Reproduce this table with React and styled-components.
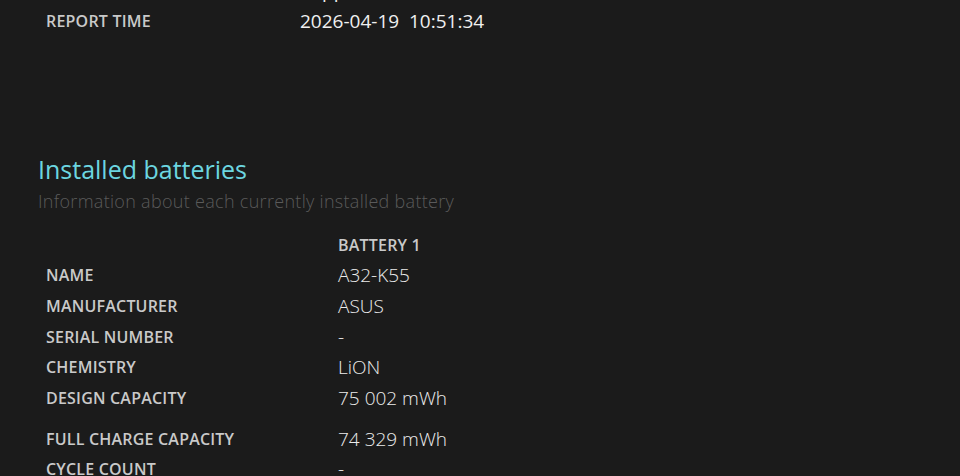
import React from "react";
import styled, { createGlobalStyle } from "styled-components";

const GlobalStyle = createGlobalStyle`
    html, body {
        margin: 0;
        padding: 0;
        background: #1b1b1b;
        overflow: hidden;
    }
    body {
        font-family: "Open Sans", "Noto Sans", sans-serif;
        color: #e6e6e6;
    }
`;

const systemInfo = [
    { label: "Connected standby", value: "Supported" },
    { label: "Report time", value: "2026-04-19\u00a0\u00a010:51:34" },
];

const batteryRows = [
    { label: "Name", value: "A32-K55" },
    { label: "Manufacturer", value: "ASUS" },
    { label: "Serial number", value: "-" },
    { label: "Chemistry", value: "LiON" },
    { label: "Design capacity", value: "75 002 mWh" },
    { label: "Full charge capacity", value: "74 329 mWh", spaced: true },
    { label: "Cycle count", value: "-" },
];

export default function App() {
    return (
        <>
            <GlobalStyle />
            <Page>
                <InfoTable>
                    {systemInfo.map((row) => (
                        <InfoRow key={row.label}>
                            <Label>{row.label}</Label>
                            <InfoValue>{row.value}</InfoValue>
                        </InfoRow>
                    ))}
                </InfoTable>

                <Section>
                    <Heading>Installed batteries</Heading>
                    <SubHeading>Information about each currently installed battery</SubHeading>

                    <BatteryTable>
                        <BatteryRow $head>
                            <span />
                            <ColumnTitle>Battery 1</ColumnTitle>
                        </BatteryRow>
                        {batteryRows.map((row) => (
                            <BatteryRow key={row.label} $spaced={row.spaced}>
                                <Label>{row.label}</Label>
                                <Value>{row.value}</Value>
                            </BatteryRow>
                        ))}
                    </BatteryTable>
                </Section>
            </Page>
        </>
    );
}

const Page = styled.div`
    padding: 0 0 0 37px;
    margin-top: -24px;
`;
const InfoTable = styled.div`
    display: flex;
    flex-direction: column;
`;
const InfoRow = styled.div`
    display: grid;
    grid-template-columns: 254px 1fr;
    align-items: center;
    height: 30px;
    padding-left: 9px;
`;
const Label = styled.div`
    font-size: 16px;
    font-weight: 600;
    letter-spacing: 0.2px;
    text-transform: uppercase;
    color: #c9c9c9;
    white-space: nowrap;
`;
const InfoValue = styled.div`
    font-size: 19px;
    color: #f0f0f0;
    white-space: nowrap;
`;
const Section = styled.section`
    margin-top: 117px;
`;
const Heading = styled.h2`
    margin: 0;
    font-size: 25px;
    font-weight: 400;
    color: #6cd6e0;
    line-height: 32px;
    padding-left: 1px;
`;
const SubHeading = styled.p`
    margin: 4px 0 0;
    padding-left: 1px;
    font-size: 18px;
    font-weight: 300;
    letter-spacing: 0.3px;
    color: #5a5a5a;
    line-height: 24px;
`;
const BatteryTable = styled.div`
    margin-top: 17px;
    display: flex;
    flex-direction: column;
`;
const BatteryRow = styled.div`
    display: grid;
    grid-template-columns: 292px 1fr;
    align-items: center;
    height: ${(p) => (p.$head ? "30px" : "30.7px")};
    margin-top: ${(p) => (p.$spaced ? "10px" : "0")};
    padding-left: 9px;
`;
const ColumnTitle = styled.div`
    font-size: 16px;
    font-weight: 600;
    letter-spacing: 0.2px;
    text-transform: uppercase;
    color: #c9c9c9;
`;
const Value = styled.div`
    font-size: 19px;
    font-weight: 300;
    color: #ececec;
    white-space: nowrap;
`;
